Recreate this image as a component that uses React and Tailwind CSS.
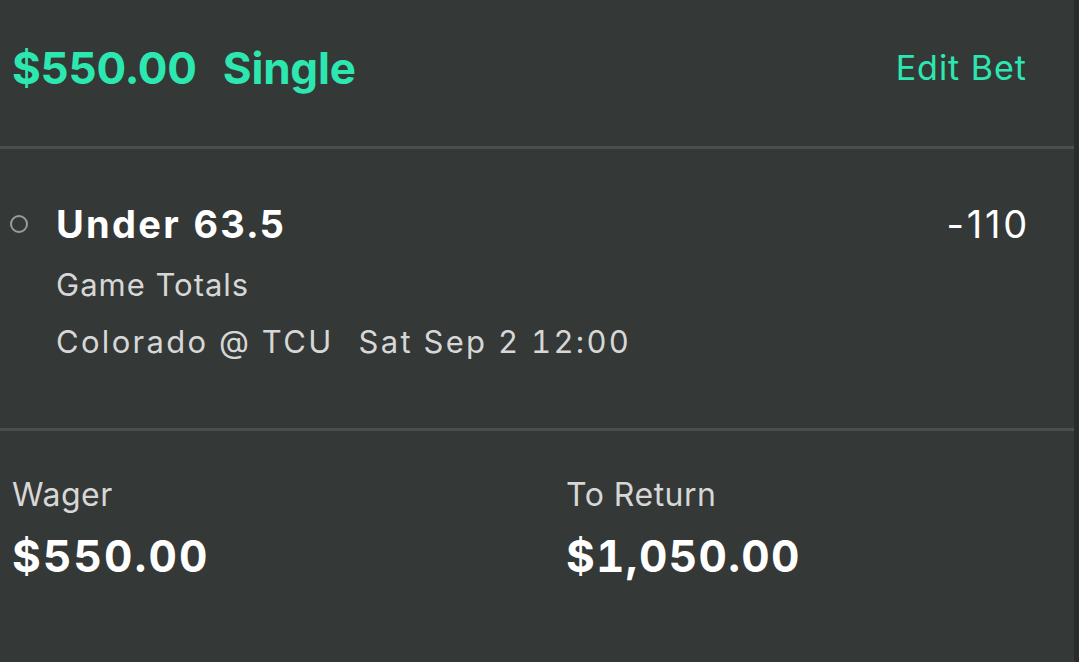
export default function App() {
  return (
    <div
      className="w-[1079px] h-[662px] flex bg-[#2a2c2c] overflow-hidden"
      style={{ fontFamily: 'Inter, "Noto Sans", sans-serif' }}
    >
      <div className="w-[1074px] h-full bg-[#343837] flex flex-col">
        {/* Header */}
        <div className="h-[146px] pt-[46px] pl-[12px] pr-[47px]">
          <div className="flex items-center justify-between h-[44px]">
            <div className="flex text-[44px] leading-none font-bold text-[#2ce8b0] tracking-[-0.2px]">
              <span>$550.00</span>
              <span className="ml-[26px]">Single</span>
            </div>
            <div className="text-[34px] leading-none text-[#2ce8b0] tracking-[1px]">Edit Bet</div>
          </div>
        </div>
        <div className="h-[3px] bg-[#4a4e4d]" />

        {/* Selection */}
        <div className="h-[279px] pt-[56px] pr-[47px]">
          <div className="flex items-center justify-between h-[38px]">
            <div className="flex items-center">
              <div className="ml-[10px] w-[18px] h-[18px] rounded-full border-2 border-[#9a9c9b]" />
              <div className="ml-[28px] text-[38px] leading-none font-bold text-white tracking-[2.3px] tabular-nums">Under 63.5</div>
            </div>
            <div className="text-[38px] leading-none text-white tracking-[2.8px] -mr-[3px]">-110</div>
          </div>
          <div className="ml-[56px] mt-[26px] text-[31px] leading-none text-[#d6d7d6] tracking-[1px]">Game Totals</div>
          <div className="ml-[56px] mt-[26px] flex text-[31px] leading-none text-[#d6d7d6] tracking-[2.3px] tabular-nums">
            <span>Colorado @ TCU</span>
            <span className="ml-[25px]">Sat Sep 2 12:00</span>
          </div>
        </div>
        <div className="h-[3px] bg-[#4a4e4d]" />

        {/* Wager */}
        <div className="flex-1 pt-[48px] pl-[12px] flex">
          <div className="w-[554px]">
            <div className="text-[32px] leading-none text-[#d6d7d6] tracking-[0.5px]">Wager</div>
            <div className="mt-[23px] text-[44px] leading-none font-bold text-white tabular-nums tracking-[2.1px]">$550.00</div>
          </div>
          <div>
            <div className="text-[32px] leading-none text-[#d6d7d6] tracking-[0.5px]">To Return</div>
            <div className="mt-[23px] text-[44px] leading-none font-bold text-white tabular-nums tracking-[1.3px]">$1,050.00</div>
          </div>
        </div>
      </div>
    </div>
  );
}
